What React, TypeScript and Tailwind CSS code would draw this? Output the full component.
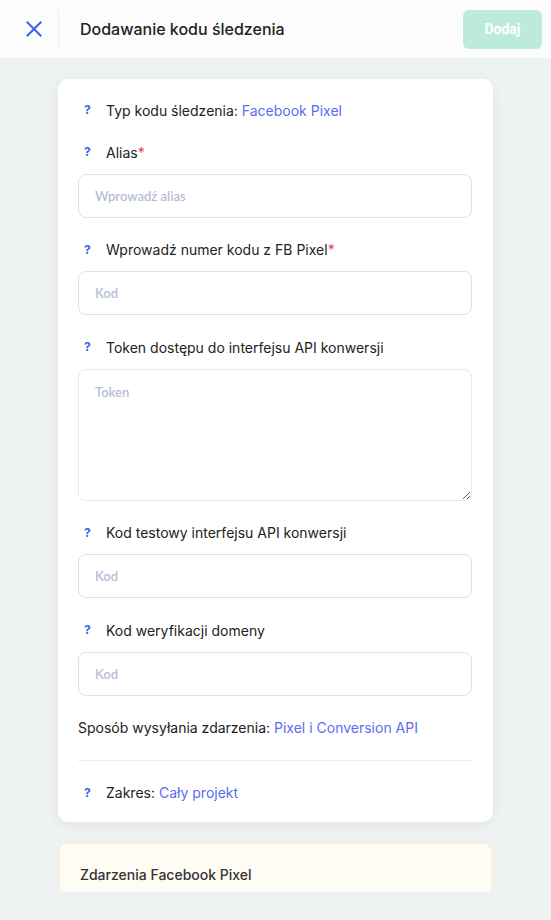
import React from 'react';

const Help = () => (
  <span className="w-[22px] shrink-0 text-[12px] font-bold text-[#3d5fe0] font-['Inter',sans-serif]">?</span>
);

const Label = ({ children, help = true }: { children: React.ReactNode; help?: boolean }) => (
  <div className="flex items-center h-5 pl-[6px] text-[14px] text-[#222] font-['Inter',sans-serif]">
    {help && <Help />}
    <span>{children}</span>
  </div>
);

const Input = ({ placeholder }: { placeholder: string }) => (
  <input
    type="text"
    placeholder={placeholder}
    className="w-full h-[44px] px-4 rounded-lg border border-[#dedff0] bg-white text-[13px] font-['Lato',sans-serif] font-semibold placeholder:text-[#b6bed7] outline-none"
  />
);

export default function App() {
  return (
    <div className="w-[551px] h-[920px] bg-[#eef2f2] flex flex-col overflow-hidden">
      {/* nagłówek */}
      <header className="h-[58px] shrink-0 bg-[#fcfcfc] flex items-center">
        <button className="w-[59px] h-[39px] flex items-center pl-[26px] border-r border-[#eeeeee]">
          <svg width="16" height="16" viewBox="0 0 16 16" fill="none" stroke="#3b63e6" strokeWidth="2" strokeLinecap="square">
            <path d="M1.5 1.5L14.5 14.5M14.5 1.5L1.5 14.5" />
          </svg>
        </button>
        <h1 className="ml-[21px] flex-1 text-[16px] font-medium text-[#222] font-['Inter',sans-serif]">
          Dodawanie kodu śledzenia
        </h1>
        <button className="mr-[9px] w-[79px] h-[39px] rounded-md bg-[#bdebd9] text-white text-[14px] font-bold font-['Roboto',sans-serif]">
          Dodaj
        </button>
      </header>

      {/* treść */}
      <main className="h-[834px] shrink-0 overflow-hidden px-[58px] pt-[21px] flex flex-col gap-[21px]">
        <div className="bg-white rounded-[10px] shadow-[0_3px_14px_rgba(0,0,0,0.06)] pl-5 pr-[21px] pt-[21px] pb-[19px] flex flex-col gap-[22px]">
          <Label>
            Typ kodu śledzenia: <span className="text-[#5b6cf3]">Facebook Pixel</span>
          </Label>

          <div className="flex flex-col gap-[11.5px]">
            <Label>
              Alias<span className="text-[#ef3b4a]">*</span>
            </Label>
            <Input placeholder="Wprowadź alias" />
          </div>

          <div className="flex flex-col gap-[11.5px]">
            <Label>
              Wprowadź numer kodu z FB Pixel<span className="text-[#ef3b4a]">*</span>
            </Label>
            <Input placeholder="Kod" />
          </div>

          <div className="flex flex-col gap-[11.5px]">
            <Label>Token dostępu do interfejsu API konwersji</Label>
            <textarea
              placeholder="Token"
              className="w-full h-[132px] px-4 py-[13px] rounded-lg border border-[#e6e9ef] bg-white text-[13px] font-['Lato',sans-serif] font-semibold placeholder:text-[#b6bed7] outline-none"
            />
          </div>

          <div className="flex flex-col gap-[11.5px]">
            <Label>Kod testowy interfejsu API konwersji</Label>
            <Input placeholder="Kod" />
          </div>

          <div className="flex flex-col gap-[11.5px]">
            <Label>Kod weryfikacji domeny</Label>
            <Input placeholder="Kod" />
          </div>

          <div className="flex items-center h-5 text-[14px] text-[#222] font-['Inter',sans-serif]">
            Sposób wysyłania zdarzenia:&nbsp;<span className="text-[#5b6cf3]">Pixel i Conversion API</span>
          </div>

          <div className="h-px bg-[#eeeeee]" />

          <Label>
            Zakres: <span className="text-[#5b6cf3]">Cały projekt</span>
          </Label>
        </div>

        <div className="mx-px shrink-0 bg-[#fffcf3] border border-[#fbefcc] rounded-t-[8px] px-5 pt-[20px] pb-8">
          <h2 className="text-[14px] font-medium text-[#333] font-['Inter',sans-serif]">Zdarzenia Facebook Pixel</h2>
        </div>
      </main>
    </div>
  );
}
